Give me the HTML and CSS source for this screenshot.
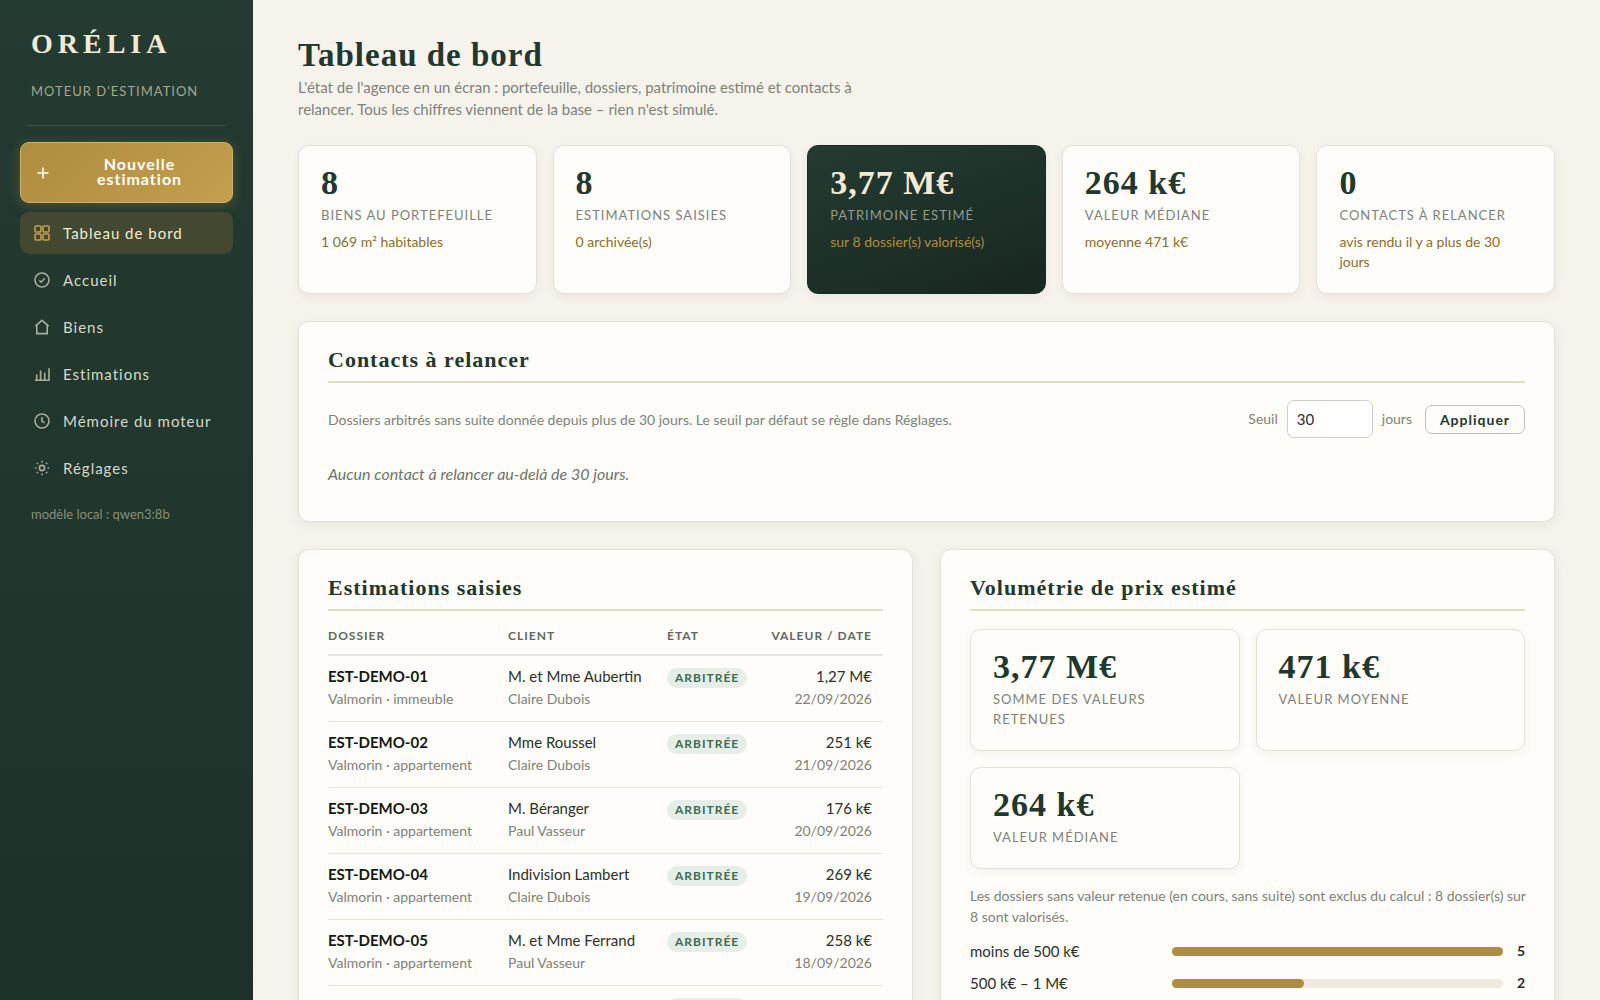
FILE: index.html
```html
<!DOCTYPE html>
<html lang="fr">
<head>
<meta charset="utf-8">
<meta name="viewport" content="width=device-width, initial-scale=1">
<title>Orélia – Tableau de bord</title>
<link rel="stylesheet" href="styles.css">
</head>
<body>
<div class="app">
  <aside class="sidebar">
    <div class="brand">
      <div class="brand-name">ORÉLIA</div>
      <div class="brand-sub">MOTEUR D'ESTIMATION</div>
    </div>
    <button class="new-btn" type="button">
      <svg class="icon" viewBox="0 0 16 16"><path d="M8 2.5v11M2.5 8h11"/></svg>
      <span class="new-label">Nouvelle estimation</span>
    </button>
    <nav class="nav">
      <a class="nav-link active" href="#tableau" aria-current="page">
        <svg class="icon" viewBox="0 0 16 16"><rect x="1" y="1" width="6" height="6" rx="1"/><rect x="9" y="1" width="6" height="6" rx="1"/><rect x="1" y="9" width="6" height="6" rx="1"/><rect x="9" y="9" width="6" height="6" rx="1"/></svg>
        Tableau de bord</a>
      <a class="nav-link" href="#accueil">
        <svg class="icon" viewBox="0 0 16 16"><circle cx="8" cy="8" r="7"/><path d="M5.3 8.3l1.9 1.9 3.5-4"/></svg>
        Accueil</a>
      <a class="nav-link" href="#biens">
        <svg class="icon" viewBox="0 0 16 16"><path d="M1.3 7.2L8 1.3l6.7 5.9M2.8 6v8.6h10.4V6"/></svg>
        Biens</a>
      <a class="nav-link" href="#estimations">
        <svg class="icon" viewBox="0 0 16 16"><path d="M1 14.3h14V2.2M2.7 14V8.6M6.6 14V4.4M10.7 14V6.8"/></svg>
        Estimations</a>
      <a class="nav-link" href="#memoire">
        <svg class="icon" viewBox="0 0 16 16"><circle cx="8" cy="8" r="7"/><path d="M8 4v4.3l2.6 1.6"/></svg>
        Mémoire du moteur</a>
      <a class="nav-link" href="#reglages">
        <svg class="icon" viewBox="0 0 16 16"><circle cx="8" cy="8" r="2.6"/><path d="M8 .8v1.6M8 13.6v1.6M.8 8h1.6M13.6 8h1.6M2.9 2.9l1.1 1.1M12 12l1.1 1.1M2.9 13.1L4 12M12 4l1.1-1.1"/></svg>
        Réglages</a>
    </nav>
    <p class="model">modèle local : qwen3:8b</p>
  </aside>

  <main class="main">
    <header class="page-head">
      <h1>Tableau de bord</h1>
      <p>L'état de l'agence en un écran : portefeuille, dossiers, patrimoine estimé et contacts à relancer. Tous les chiffres viennent de la base – rien n'est simulé.</p>
    </header>

    <section class="stats" aria-label="Indicateurs">
      <div class="stat"><div class="stat-value">8</div><div class="stat-label">BIENS AU PORTEFEUILLE</div><div class="stat-note">1 069 m² habitables</div></div>
      <div class="stat"><div class="stat-value">8</div><div class="stat-label">ESTIMATIONS SAISIES</div><div class="stat-note">0 archivée(s)</div></div>
      <div class="stat dark"><div class="stat-value">3,77 M€</div><div class="stat-label">PATRIMOINE ESTIMÉ</div><div class="stat-note">sur 8 dossier(s) valorisé(s)</div></div>
      <div class="stat"><div class="stat-value">264 k€</div><div class="stat-label">VALEUR MÉDIANE</div><div class="stat-note">moyenne 471 k€</div></div>
      <div class="stat"><div class="stat-value">0</div><div class="stat-label">CONTACTS À RELANCER</div><div class="stat-note">avis rendu il y a plus de 30 jours</div></div>
    </section>

    <section class="panel">
      <h2>Contacts à relancer</h2>
      <div class="follow">
        <p class="hint">Dossiers arbitrés sans suite donnée depuis plus de 30 jours. Le seuil par défaut se règle dans Réglages.</p>
        <form class="threshold">
          <label for="seuil">Seuil</label>
          <input id="seuil" type="text" inputmode="numeric" value="30">
          <span class="unit">jours</span>
          <button class="apply" type="button">Appliquer</button>
        </form>
      </div>
      <p class="empty">Aucun contact à relancer au-delà de 30 jours.</p>
    </section>

    <div class="columns">
      <section class="panel">
        <h2>Estimations saisies</h2>
        <table class="table">
          <thead><tr><th class="c-file">DOSSIER</th><th class="c-client">CLIENT</th><th class="c-state">ÉTAT</th><th class="num">VALEUR / DATE</th></tr></thead>
          <tbody>
            <tr><td><strong>EST-DEMO-01</strong><small>Valmorin · immeuble</small></td><td>M. et Mme Aubertin<small>Claire Dubois</small></td><td><span class="badge">ARBITRÉE</span></td><td class="num">1,27 M€<small>22/09/2026</small></td></tr>
            <tr><td><strong>EST-DEMO-02</strong><small>Valmorin · appartement</small></td><td>Mme Roussel<small>Claire Dubois</small></td><td><span class="badge">ARBITRÉE</span></td><td class="num">251 k€<small>21/09/2026</small></td></tr>
            <tr><td><strong>EST-DEMO-03</strong><small>Valmorin · appartement</small></td><td>M. Béranger<small>Paul Vasseur</small></td><td><span class="badge">ARBITRÉE</span></td><td class="num">176 k€<small>20/09/2026</small></td></tr>
            <tr><td><strong>EST-DEMO-04</strong><small>Valmorin · appartement</small></td><td>Indivision Lambert<small>Claire Dubois</small></td><td><span class="badge">ARBITRÉE</span></td><td class="num">269 k€<small>19/09/2026</small></td></tr>
            <tr><td><strong>EST-DEMO-05</strong><small>Valmorin · appartement</small></td><td>M. et Mme Ferrand<small>Paul Vasseur</small></td><td><span class="badge">ARBITRÉE</span></td><td class="num">258 k€<small>18/09/2026</small></td></tr>
            <tr><td><strong>EST-DEMO-06</strong><small>Valmorin · maison</small></td><td>M. et Mme Cadet<small>Claire Dubois</small></td><td><span class="badge">ARBITRÉE</span></td><td class="num">775 k€<small>17/09/2026</small></td></tr>
          </tbody>
        </table>
      </section>

      <section class="panel">
        <h2>Volumétrie de prix estimé</h2>
        <div class="mini-stats">
          <div class="stat"><div class="stat-value">3,77 M€</div><div class="stat-label">SOMME DES VALEURS RETENUES</div></div>
          <div class="stat"><div class="stat-value">471 k€</div><div class="stat-label">VALEUR MOYENNE</div></div>
          <div class="stat"><div class="stat-value">264 k€</div><div class="stat-label">VALEUR MÉDIANE</div></div>
        </div>
        <p class="hint wide">Les dossiers sans valeur retenue (en cours, sans suite) sont exclus du calcul : 8 dossier(s) sur 8 sont valorisés.</p>
        <div class="bars">
          <div class="bar-row"><span>moins de 500 k€</span><div class="track"><div class="fill" style="width:100%"></div></div><b>5</b></div>
          <div class="bar-row"><span>500 k€ – 1 M€</span><div class="track"><div class="fill" style="width:40%"></div></div><b>2</b></div>
        </div>
      </section>
    </div>
  </main>
</div>
</body>
</html>
```
FILE: styles.css
```css
:root {
  --green: #22372e;
  --gold: #b08d3e;
  --muted: #7d827b;
  --card: #fffdf9;
  --line: #e4e1d9;
  --sans: Lato, "Liberation Sans", sans-serif;
  --serif: "Liberation Serif", serif;
}

* { box-sizing: border-box; }

body {
  margin: 0;
  background: #f6f3ec;
  color: #2b302c;
  font: 15px/22px var(--sans);
}

h1, h2, p { margin: 0; }
button, input { font-family: inherit; }

.app { display: flex; min-height: 100vh; }

/* Sidebar */
.sidebar {
  flex: none;
  width: 253px;
  padding: 26px 20px;
  background: linear-gradient(180deg, #243b31, #1d3028);
}

.brand {
  margin: 0 7px 16px 6px;
  padding: 0 5px 24px;
  border-bottom: 1px solid #3b5246;
}

.brand-name {
  color: #f3ead6;
  font: bold 28px/36px var(--serif);
  letter-spacing: 5px;
}

.brand-sub {
  margin-top: 19px;
  color: #a3a78f;
  font-size: 13px;
  line-height: 20px;
  letter-spacing: 1px;
}

.icon {
  flex: none;
  width: 16px;
  height: 16px;
  fill: none;
  stroke: currentColor;
  stroke-width: 1.6;
}

.new-btn {
  display: flex;
  align-items: center;
  gap: 14px;
  width: 100%;
  height: 61px;
  margin-bottom: 9px;
  padding: 0 14px;
  border: 1px solid #cfb269;
  border-radius: 9px;
  background: linear-gradient(135deg, #b08d3e, #c29e4d);
  box-shadow: 0 2px 12px rgba(176, 141, 62, .35);
  color: #fff;
  font-size: 16px;
  font-weight: bold;
  line-height: 15px;
  letter-spacing: 1px;
}

.new-label { flex: 1; padding: 0 32px 3px 28px; }

.nav { display: grid; gap: 5px; }

.nav-link {
  display: flex;
  align-items: center;
  gap: 13px;
  height: 42px;
  padding: 0 14px 1px;
  border-radius: 9px;
  color: #d9d9c6;
  font-size: 15px;
  letter-spacing: 1px;
  text-decoration: none;
}

.nav-link .icon { color: #a9ae99; }
.nav-link.active { background: #424930; color: #f3ead6; }
.nav-link.active .icon { color: #c29e4d; }

.model {
  margin: 15px 11px;
  color: #888f7b;
  font-size: 13px;
  line-height: 20px;
}

/* Main */
.main { flex: 1; min-width: 0; padding: 35px 45px; }

.page-head { max-width: 600px; }

h1 {
  color: var(--green);
  font: bold 33px/40px var(--serif);
  letter-spacing: 1px;
}

.page-head p { margin-top: 1px; color: var(--muted); }

.stats {
  display: grid;
  grid-template-columns: repeat(5, 1fr);
  gap: 16px;
  margin: 25px 0 27px;
}

.stat {
  padding: 18px 22px 21px;
  border: 1px solid var(--line);
  border-radius: 11px;
  background: var(--card);
  box-shadow: 0 3px 10px rgba(60, 50, 30, .06);
}

.stat-value {
  color: var(--green);
  font: bold 34px/38px var(--serif);
  letter-spacing: 1px;
}

.stat-label {
  margin-top: 3px;
  color: var(--muted);
  font-size: 13px;
  line-height: 20px;
  letter-spacing: 1px;
}

.stat-note {
  margin-top: 7px;
  padding-right: 10px;
  color: #8a6d2f;
  font-size: 14px;
  line-height: 20px;
}

.dark {
  border-color: #1a2b23;
  background: linear-gradient(160deg, #243b31, #182720);
}
.dark .stat-value { color: #f3ead6; }
.dark .stat-label { color: #929c8a; }
.dark .stat-note { color: #b08d3e; }

.panel {
  padding: 22px 29px 30px;
  border: 1px solid var(--line);
  border-radius: 11px;
  background: var(--card);
  box-shadow: 0 3px 12px rgba(60, 50, 30, .07);
}

h2 {
  padding-bottom: 6px;
  border-bottom: 2px solid #e8dcc6;
  color: var(--green);
  font: bold 22px/31px var(--serif);
  letter-spacing: 1px;
}

.hint { color: var(--muted); font-size: 14px; line-height: 21px; }
.hint.wide { margin-right: -12px; }

.follow {
  display: flex;
  align-items: center;
  justify-content: space-between;
  margin: 17px 0 25px;
}

.threshold {
  display: flex;
  align-items: center;
  color: var(--muted);
  font-size: 14px;
}

.threshold input {
  width: 86px;
  height: 38px;
  margin: 0 9px;
  padding: 0 9px;
  border: 1px solid #cfcfc8;
  border-radius: 7px;
  background: #fff;
  color: #2b302c;
  font-size: 15px;
}

.apply {
  width: 100px;
  height: 29px;
  margin-left: 13px;
  padding: 0;
  border: 1px solid #bcc1ba;
  border-radius: 7px;
  background: var(--card);
  color: var(--green);
  font-size: 14px;
  font-weight: bold;
  letter-spacing: 1px;
}

.empty { color: #6f746d; font-size: 16px; font-style: italic; padding-bottom: 6px; }

.columns {
  display: grid;
  grid-template-columns: 1fr 1fr;
  gap: 27px;
  margin-top: 27px;
}

/* Table */
.table { width: 100%; border-collapse: collapse; table-layout: fixed; }

.table th {
  height: 44px;
  padding: 6px 0 0;
  border-bottom: 2px solid #e8e5dc;
  color: #62675f;
  font-size: 12px;
  line-height: 20px;
  letter-spacing: 1px;
  text-align: left;
}

.c-file { width: 180px; }
.c-client { width: 159px; }
.c-state { width: 95px; }

.table td {
  height: 66px;
  padding: 9px 0 10px;
  border-bottom: 1px solid #e8e5dc;
  vertical-align: top;
}

.table .num { padding-right: 11px; text-align: right; }
.table strong { color: #141816; }

.table small {
  display: block;
  color: var(--muted);
  font-size: 14px;
  line-height: 23px;
}

.badge {
  display: inline-block;
  padding: 0 8px;
  border-radius: 10px;
  background: #e5eee7;
  color: #3e6b53;
  font-size: 12px;
  font-weight: bold;
  line-height: 20px;
  letter-spacing: 1px;
}

/* Price distribution */
.mini-stats {
  display: grid;
  grid-template-columns: 1fr 1fr;
  gap: 16px;
  margin: 18px 0 16px;
}

.bars { display: grid; gap: 10px; margin-top: 13px; }

.bar-row {
  display: grid;
  grid-template-columns: 190px 1fr 10px;
  align-items: center;
  gap: 12px;
}

.track { height: 9px; border-radius: 5px; background: #efe9df; }
.fill { height: 9px; border-radius: 5px; background: var(--gold); }
.bar-row b { font-size: 14px; text-align: right; }
```
